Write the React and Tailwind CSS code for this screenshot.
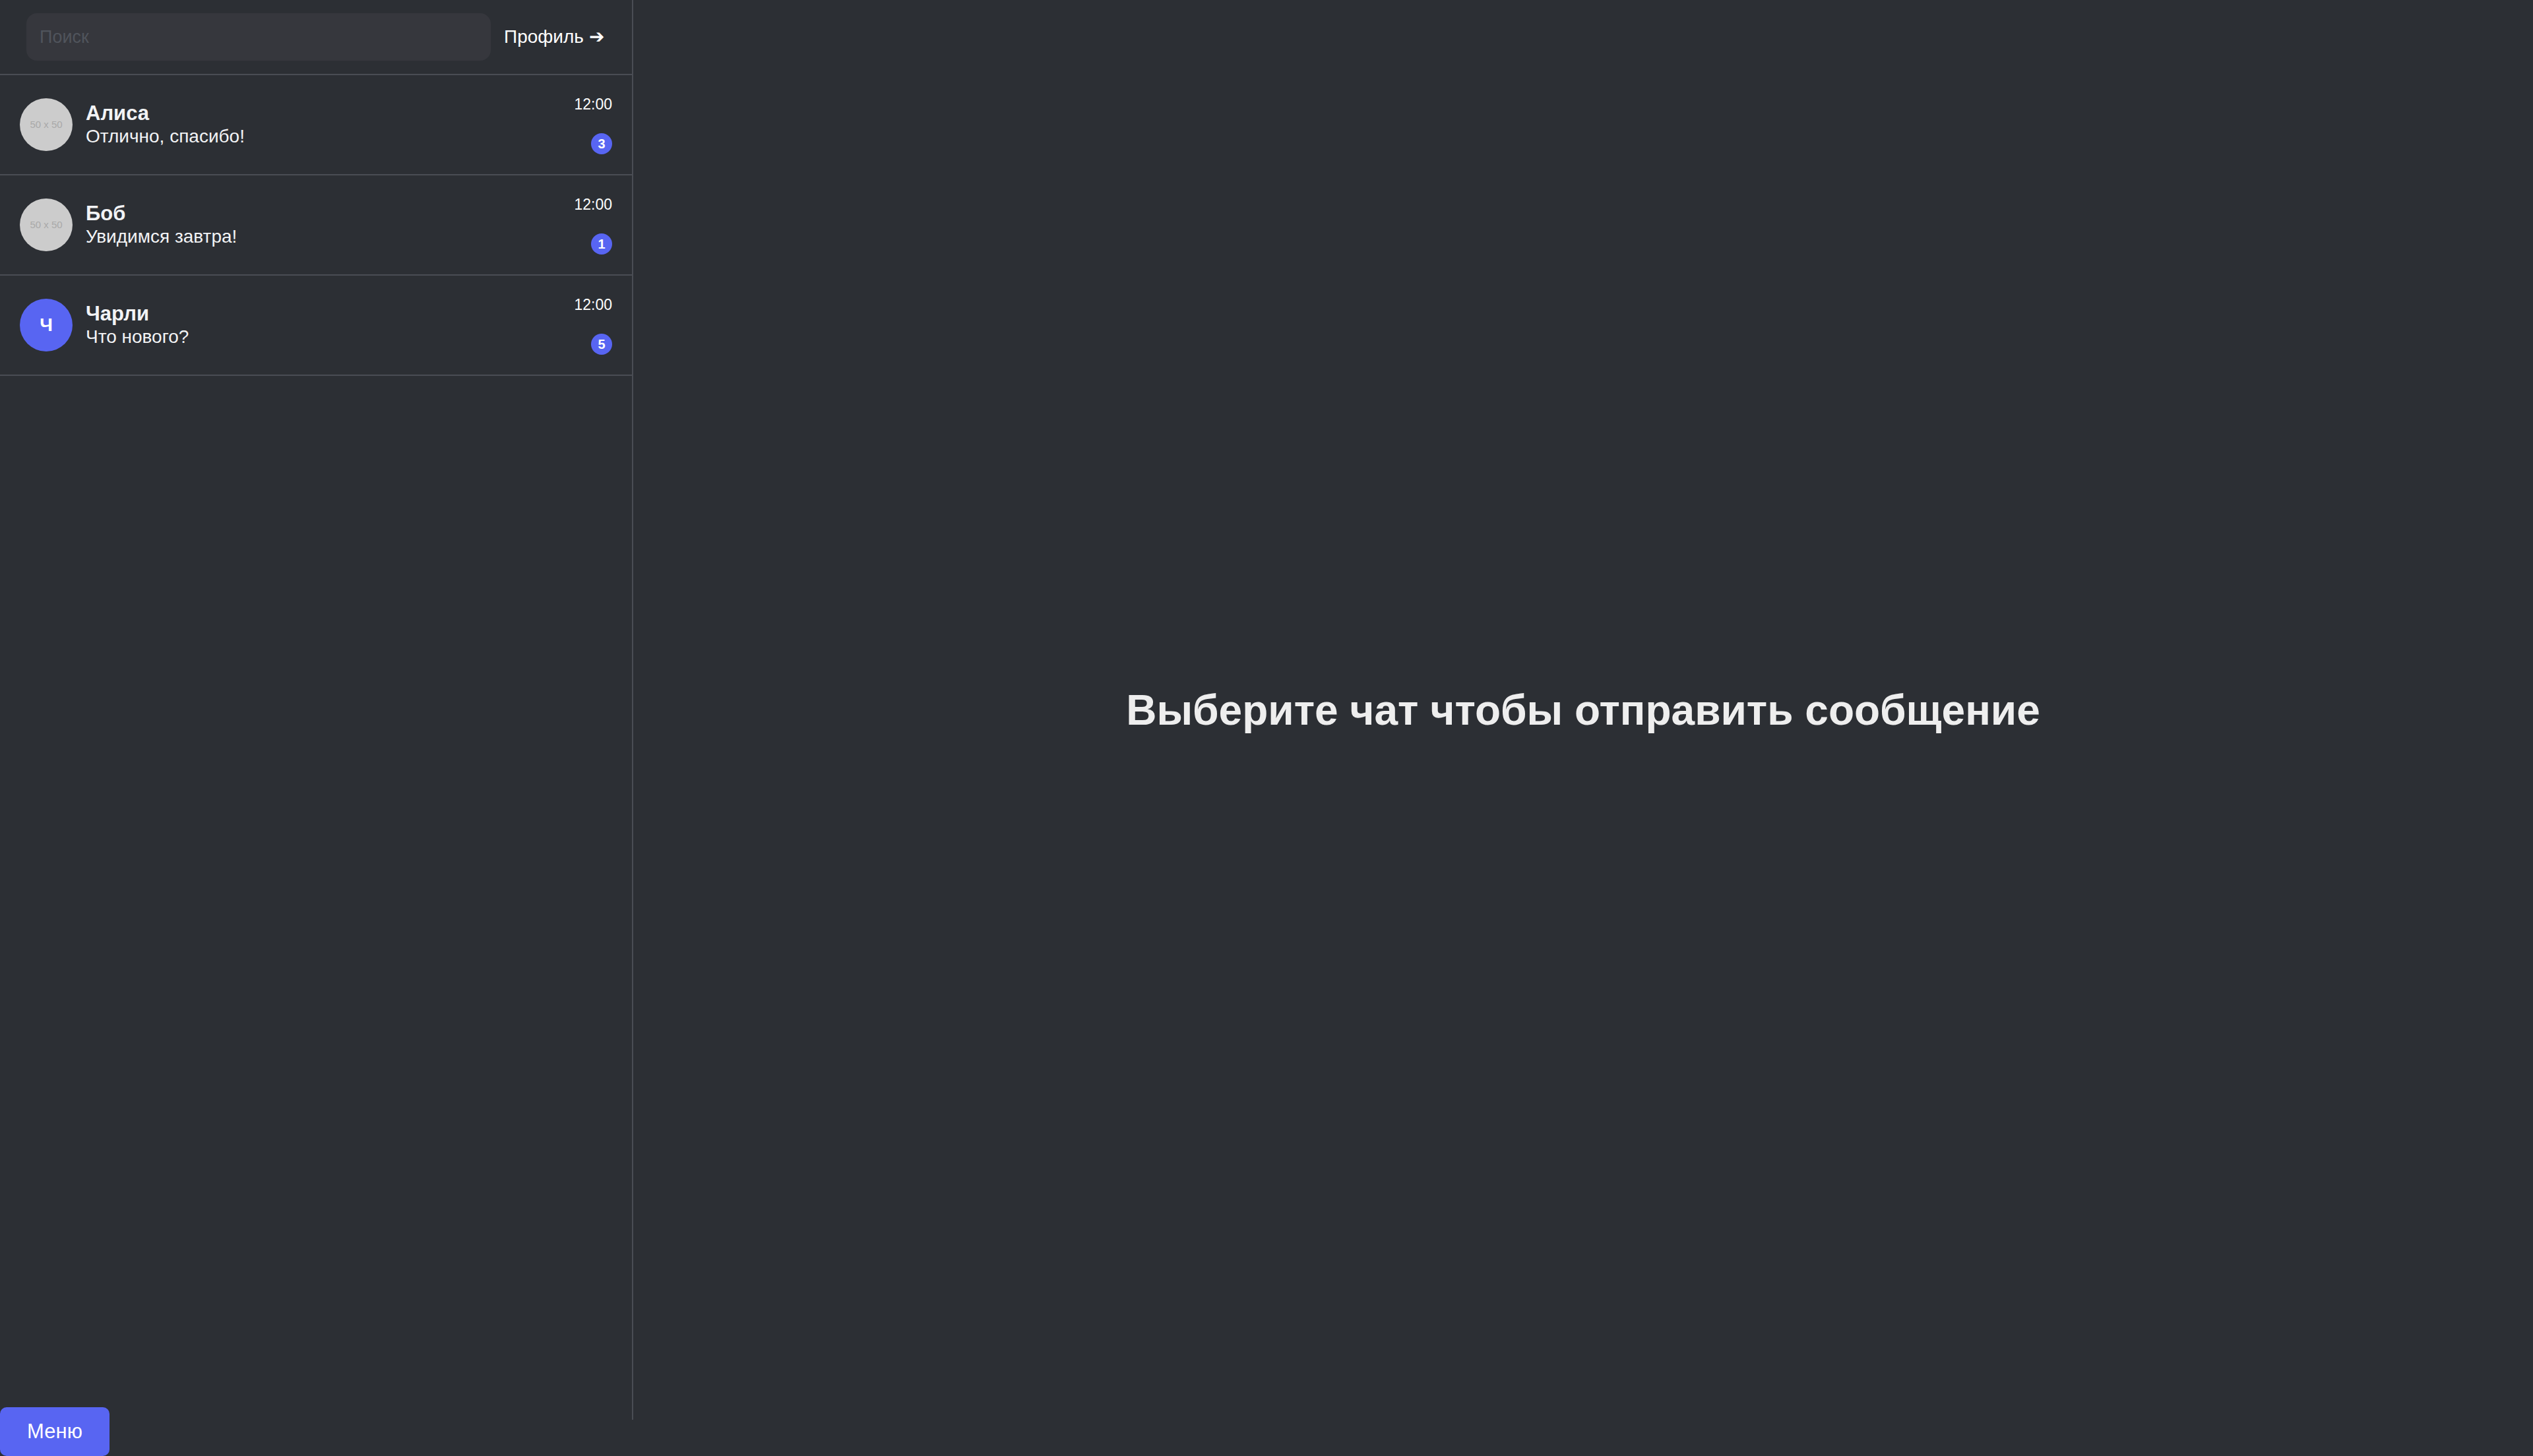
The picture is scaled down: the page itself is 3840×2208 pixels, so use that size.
import React from 'react'

const chats = [
  { id: 1, name: 'Алиса', last: 'Отлично, спасибо!', time: '12:00', unread: 3, avatar: null },
  { id: 2, name: 'Боб', last: 'Увидимся завтра!', time: '12:00', unread: 1, avatar: null },
  { id: 3, name: 'Чарли', last: 'Что нового?', time: '12:00', unread: 5, avatar: 'Ч' },
]

function Avatar({ letter }) {
  if (letter) {
    return (
      <div className="flex h-[80px] w-[80px] shrink-0 items-center justify-center rounded-full bg-[#5865f2] text-[28px] font-bold text-white">
        {letter}
      </div>
    )
  }
  // placeholder image, like placehold.it 50x50
  return (
    <div className="flex h-[80px] w-[80px] shrink-0 items-center justify-center rounded-full bg-[#cccccc] text-[15px] text-[#a9a9a9]">
      50 x 50
    </div>
  )
}

function ChatItem({ chat }) {
  return (
    <div className="flex h-[152px] items-center gap-[20px] border-b-2 border-[#4a4d54] px-[30px]">
      <Avatar letter={chat.avatar} />
      <div className="flex min-w-0 flex-1 flex-col">
        <span className="text-[31px] font-bold leading-[36px] text-[#f2f3f5]">{chat.name}</span>
        <span className="text-[28px] leading-[34px] text-[#f2f3f5]">{chat.last}</span>
      </div>
      <div className="flex flex-col items-end gap-[30px]">
        <span className="text-[23px] leading-[27px] text-white">{chat.time}</span>
        <span className="flex h-[32px] w-[32px] items-center justify-center rounded-full bg-[#5865f2] text-[20px] font-bold text-white">
          {chat.unread}
        </span>
      </div>
    </div>
  )
}

export default function App() {
  return (
    <div className="relative h-[2208px] w-full overflow-hidden bg-[#2c2f34] font-['Liberation_Sans',Arial,sans-serif]">
      <div className="flex h-[2153px]">
        <aside className="flex w-[960px] shrink-0 flex-col border-r-2 border-[#4a4d54]">
          <div className="flex h-[114px] items-center gap-[20px] border-b-2 border-[#4a4d54] pl-[40px] pr-[40px]">
            <input
              placeholder="Поиск"
              className="h-[72px] w-[704px] rounded-[16px] bg-[#36373d] px-[20px] text-[27px] text-white outline-none placeholder:text-[#50545c]"
            />
            <button className="text-[28px] text-white">Профиль ➔</button>
          </div>
          {chats.map((c) => (
            <ChatItem key={c.id} chat={c} />
          ))}
        </aside>
        <main className="flex flex-1 items-center justify-center">
          <h1 className="text-[64px] font-bold text-[#eeeeee]">Выберите чат чтобы отправить сообщение</h1>
        </main>
      </div>
      <button className="absolute bottom-0 left-0 h-[74px] w-[166px] rounded-[10px] bg-[#5865f2] text-[31px] text-white">
        Меню
      </button>
    </div>
  )
}
